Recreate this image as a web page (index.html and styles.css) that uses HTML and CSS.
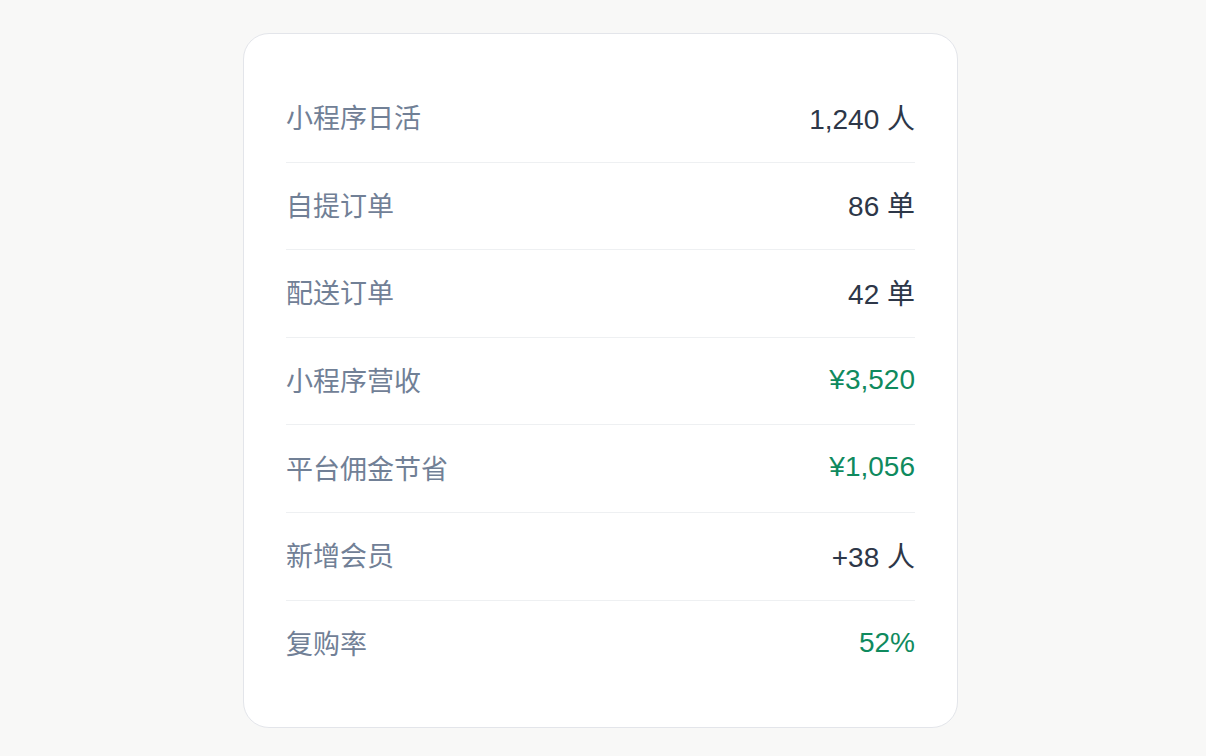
FILE: index.html
```html
<!DOCTYPE html>
<html lang="zh-CN">
<head>
  <meta charset="UTF-8">
  <meta name="viewport" content="width=device-width, initial-scale=1.0">
  <title>小程序数据</title>
  <link rel="stylesheet" href="styles.css">
</head>
<body>
  <div class="stats-card">
    <div class="stat-row">
      <span class="stat-label">小程序日活</span>
      <span class="stat-value">1,240 人</span>
    </div>
    <div class="stat-row">
      <span class="stat-label">自提订单</span>
      <span class="stat-value">86 单</span>
    </div>
    <div class="stat-row">
      <span class="stat-label">配送订单</span>
      <span class="stat-value">42 单</span>
    </div>
    <div class="stat-row">
      <span class="stat-label">小程序营收</span>
      <span class="stat-value positive">¥3,520</span>
    </div>
    <div class="stat-row">
      <span class="stat-label">平台佣金节省</span>
      <span class="stat-value positive">¥1,056</span>
    </div>
    <div class="stat-row">
      <span class="stat-label">新增会员</span>
      <span class="stat-value">+38 人</span>
    </div>
    <div class="stat-row">
      <span class="stat-label">复购率</span>
      <span class="stat-value positive">52%</span>
    </div>
  </div>
</body>
</html>
```

FILE: styles.css
```css
body {
  margin: 0;
  padding: 33px 5px 0 0;
  background: #f8f8f7;
  font-family: "Liberation Sans", Arial, "Noto Sans CJK SC", sans-serif;
}
.stats-card {
  box-sizing: border-box;
  width: 715px;
  margin: 0 auto;
  padding: 41px 42px 39px;
  background: #fff;
  border: 1px solid #e3e5ea;
  border-radius: 26px;
}
.stat-row {
  box-sizing: border-box;
  display: flex;
  justify-content: space-between;
  align-items: center;
  height: 87.6px;
  padding-bottom: 3px;
  border-bottom: 1px solid #eef0f2;
  font-size: 27px;
}
.stat-row:last-child {
  border-bottom: none;
}
.stat-label {
  color: #718096;
}
.stat-value {
  font-size: 28px;
  color: #2d3748;
}
.stat-value.positive {
  color: #0f8a5e;
}
```
